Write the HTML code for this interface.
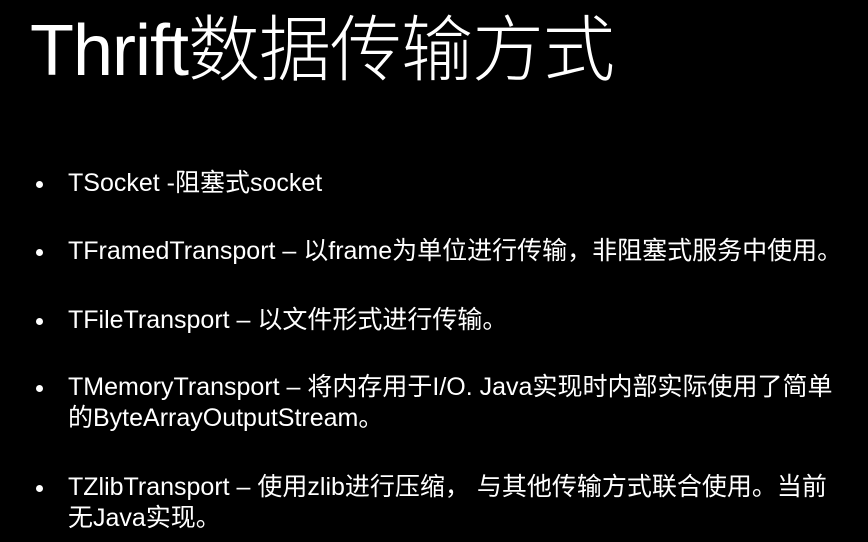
<!DOCTYPE html>
<html><head><meta charset="utf-8"><style>
html,body{margin:0;padding:0;background:#000;width:868px;height:542px;overflow:hidden}
body{position:relative;color:#fff;font-family:"Liberation Sans","Noto Sans CJK SC",sans-serif}
.t{position:absolute;left:30px;top:-9px;font-size:72px;font-weight:300;white-space:nowrap;letter-spacing:-1px}
.l{position:absolute;left:68px;font-size:25px;white-space:nowrap;line-height:31px}
.b{position:absolute;left:36px;width:7px;height:7px;border-radius:50%;background:#fff}
</style></head><body>
<div class="t">Thrift数据传输方式</div>
<div class="b" style="top:181px"></div><div class="l" style="top:168px">TSocket -阻塞式socket</div>
<div class="b" style="top:249px"></div><div class="l" style="top:236px">TFramedTransport – 以frame为单位进行传输，非阻塞式服务中使用。</div>
<div class="b" style="top:318px"></div><div class="l" style="top:305px">TFileTransport – 以文件形式进行传输。</div>
<div class="b" style="top:385px"></div><div class="l" style="top:372px">TMemoryTransport – 将内存用于I/O. Java实现时内部实际使用了简单<br>的ByteArrayOutputStream。</div>
<div class="b" style="top:485px"></div><div class="l" style="top:472px">TZlibTransport – 使用zlib进行压缩， 与其他传输方式联合使用。当前<br>无Java实现。</div>
</body></html>
